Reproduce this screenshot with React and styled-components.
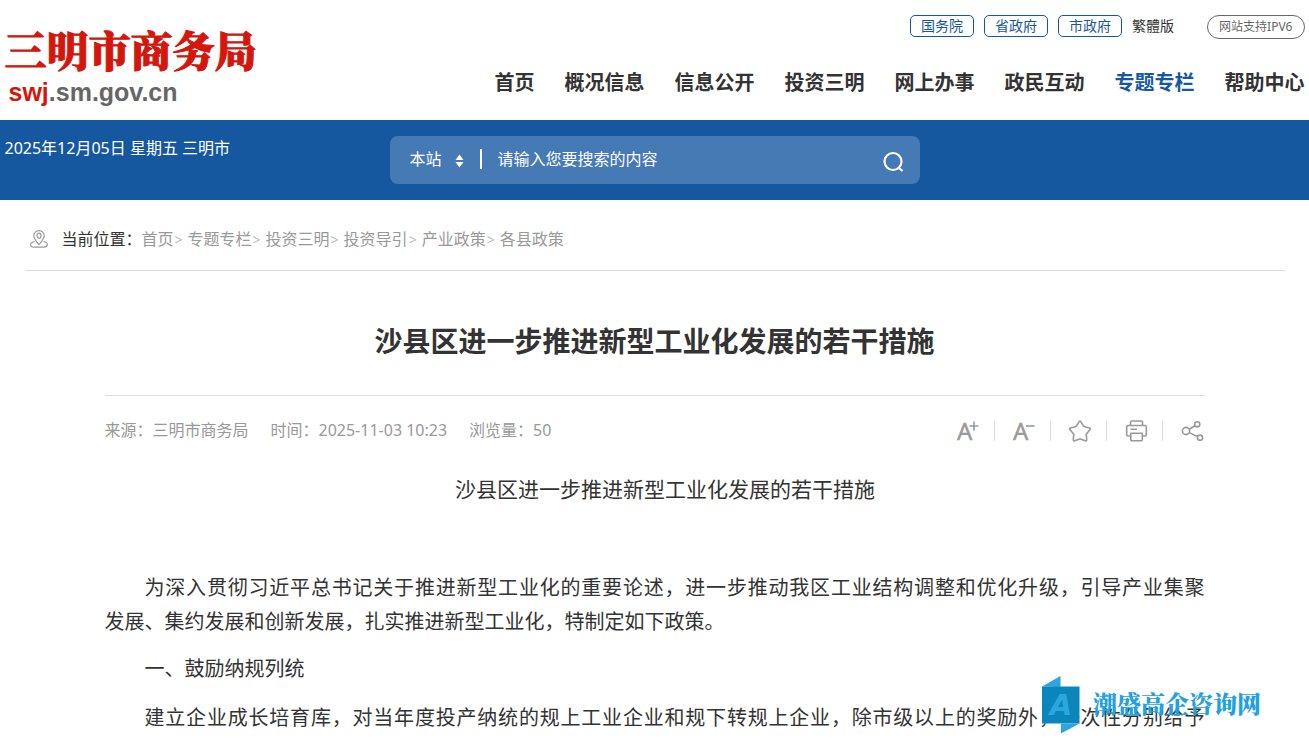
import React from "react";
import styled, { createGlobalStyle } from "styled-components";

const GlobalStyle = createGlobalStyle`
  * {
    box-sizing: border-box;
  }

  body {
    margin: 0;
    background: #fff;
    color: #333;
    font-family: "Noto Sans", "Noto Sans CJK SC", sans-serif;
    font-size: 16px;
    line-height: 24px;
  }

  a {
    color: inherit;
    text-decoration: none;
  }

  button,
  input,
  select {
    font: inherit;
    color: inherit;
    background: none;
    border: 0;
    padding: 0;
    margin: 0;
    outline: none;
  }

  button {
    cursor: pointer;
  }
`;

const Page = styled.div`
  position: relative;
`;

const Container = styled.div`
  max-width: 1300px;
  margin: 0 auto;
`;

// header
const Header = styled(Container).attrs({ as: "header" })`
  display: flex;
  justify-content: space-between;
  height: 120px;
`;

const Logo = styled.a`
  display: flex;
  flex-direction: column;
  padding-top: 24px;
  color: #d3170d;
`;

const LogoName = styled.span`
  font-family: "Noto Serif CJK SC", "Noto Sans CJK SC", serif;
  font-size: 42px;
  font-weight: 900;
  line-height: 50px;
  -webkit-text-stroke: 1px #d3170d;
`;

const LogoDomain = styled.span`
  padding: 2px 0 0 4px;
  font-family: "Liberation Sans", Arial, sans-serif;
  font-size: 25px;
  font-weight: 700;
  line-height: 32px;

  em {
    font-style: normal;
    color: #666;
  }
`;

const HeaderRight = styled.div`
  display: flex;
  flex-direction: column;
  align-items: flex-end;
  padding-top: 15px;
`;

const TopLinks = styled.div`
  display: flex;
  gap: 10px;
  height: 24px;
  font-size: 14px;
  line-height: 22px;
`;

const GovLink = styled.a`
  height: 22px;
  padding: 0 10px;
  border: 1px solid #15589f;
  border-radius: 5px;
  color: #15589f;
  line-height: 20px;
`;

const Ipv6Badge = styled.a`
  height: 24px;
  margin-left: 23px;
  padding: 0 11px;
  border: 1px solid #666;
  border-radius: 12px;
  color: #666;
  font-size: 12px;
  line-height: 22px;
`;

const Nav = styled.nav`
  display: flex;
  gap: 30px;
  padding-top: 29px;
  font-size: 20px;
  font-weight: 700;
  line-height: 30px;
  white-space: nowrap;
`;

const NavLink = styled.a`
  color: ${(props) => (props.$active ? "#15589f" : "#333")};
`;

// search band
const Band = styled.div`
  background: #15589f;
  color: #fff;
`;

const BandInner = styled(Container)`
  display: grid;
  grid-template-columns: 1fr 530px 1fr;
  height: 80px;
  padding-top: 16px;
`;

const SearchBox = styled.form`
  display: flex;
  align-items: center;
  height: 48px;
  padding: 0 16px 2px 20px;
  border-radius: 8px;
  background: #457ab4;
`;

const ScopeSelect = styled.select`
  width: 32px;
  appearance: none;
  cursor: pointer;
`;

const ScopeArrows = styled.svg`
  margin: 4px 16px 0 13px;
`;

const SearchInput = styled.input`
  flex: 1;
  height: 20px;
  padding-left: 16px;
  border-left: 2px solid #fff;
  line-height: 20px;

  &::placeholder {
    color: #fff;
    opacity: 1;
  }
`;

const SearchButton = styled.button`
  display: flex;
  padding-top: 6px;
`;

// breadcrumb
const Breadcrumb = styled.nav`
  display: flex;
  align-items: center;
  max-width: 1260px;
  height: 71px;
  margin: 0 auto;
  padding: 8px 5px 0;
  border-bottom: 1px solid #ddd;
  color: #999;
`;

const CrumbLabel = styled.span`
  padding: 0 0 0 14px;
  color: #333;
`;

const Crumb = styled.a`
  & + &::before {
    content: ">";
    padding: 0 5px 0 1px;
    color: #bbb;
    font-size: 14px;
  }
`;

// article
const Article = styled.article`
  max-width: 1100px;
  margin: 0 auto;
`;

const Title = styled.h1`
  margin: 0;
  padding: 49px 0 33px;
  border-bottom: 1px solid #ddd;
  font-size: 28px;
  line-height: 42px;
  text-align: center;
`;

const InfoBar = styled.div`
  display: flex;
  justify-content: space-between;
  align-items: center;
  height: 70px;
  color: #999;
`;

const Info = styled.div`
  display: flex;
  gap: 22px;
  padding-bottom: 2px;
`;

const Tools = styled.div`
  display: flex;
  align-items: center;
`;

const ToolButton = styled.button`
  display: flex;
  align-items: center;
  height: 20px;
  padding: 0 13px 0 18px;
  border-right: 1px solid #ddd;

  &:last-child {
    padding-right: 0;
    border-right: 0;
  }

  svg {
    overflow: visible;
  }
`;

const Subtitle = styled.h2`
  margin: 0 0 65px;
  padding-top: 6px;
  font-size: 21px;
  font-weight: 400;
  line-height: 34px;
  text-align: center;
  text-indent: 1em;
`;

const SectionTitle = styled.h3`
  margin: 13px 0 15px;
  font-size: 20px;
  font-weight: 400;
  line-height: 34px;
  text-indent: 2em;
`;

const Paragraph = styled.p`
  margin: 0;
  font-size: 20px;
  line-height: 34px;
  text-align: justify;
  text-align-last: ${(props) => (props.$full ? "justify" : "auto")};
  text-indent: 2em;
`;

const KeepTogether = styled.span`
  white-space: nowrap;
`;

// floating brand in the corner
const Watermark = styled.div`
  position: absolute;
  right: 48px;
  top: 676px;
  display: flex;
  align-items: center;
  gap: 13px;
  color: #1fa2df;
  font-family: "Noto Serif CJK SC", "Noto Sans CJK SC", serif;
  font-size: 24px;
  font-weight: 900;
  line-height: 36px;

  span {
    padding-bottom: 4px;
  }
`;

const ToolIcon = ({ children }) => (
  <svg
    width="24"
    height="24"
    viewBox="0 0 24 24"
    fill="none"
    stroke="#999"
    strokeWidth="1.6"
    strokeLinejoin="round"
  >
    {children}
  </svg>
);

const LetterA = () => (
  <text
    x="0"
    y="21"
    fill="#999"
    stroke="#999"
    strokeWidth="0.4"
    fontFamily="Noto Sans"
    fontSize="24"
  >
    A
  </text>
);

const tools = [
  {
    label: "放大字体",
    icon: (
      <>
        <LetterA />
        <path d="M12.5 7h9M17 2.5v9" />
      </>
    ),
  },
  {
    label: "缩小字体",
    icon: (
      <>
        <LetterA />
        <path d="M13 7h8.5" />
      </>
    ),
  },
  {
    label: "收藏",
    icon: (
      <path d="M10.2 2.6q.8-1.2 1.6 0l2.9 4.6q.2.4.7.5l5.2 1.3q1.4.4.5 1.5l-3.5 4.2q-.3.4-.3.9l.4 5.2q0 1.5-1.4 1l-4.8-1.9q-.5-.2-1 0l-4.8 1.9q-1.4.5-1.4-1l.4-5.2q0-.5-.3-.9L.9 10.5q-.9-1.1.5-1.5l5.2-1.3q.5-.1.7-.5z" />
    ),
  },
  {
    label: "打印",
    icon: (
      <>
        <path d="M5.5 6.5V3q0-1 1-1h10q1 0 1 1v3.5" />
        <path d="M5.5 17H3q-1.3 0-1.3-1.3V8q0-1.5 1.5-1.5h16.6q1.5 0 1.5 1.5v7.7q0 1.3-1.3 1.3h-2.5" />
        <path d="M5.8 14.2h11.5v6.6q0 1-1 1H6.8q-1 0-1-1zM5.5 10.2h6.5" />
      </>
    ),
  },
  {
    label: "分享",
    icon: (
      <>
        <circle cx="5" cy="12" r="3.6" />
        <circle cx="16.2" cy="5.3" r="2.6" />
        <circle cx="19" cy="18.7" r="2.6" />
        <path d="M8.2 10.2l5.7-3.5M8.3 13.6l8.3 4" />
      </>
    ),
  },
];

const govLinks = ["国务院", "省政府", "市政府"];

const navItems = [
  "首页",
  "概况信息",
  "信息公开",
  "投资三明",
  "网上办事",
  "政民互动",
  "专题专栏",
  "帮助中心",
];

const crumbs = [
  "首页",
  "专题专栏",
  "投资三明",
  "投资导引",
  "产业政策",
  "各县政策",
];

const App = () => {
  return (
    <Page>
      <GlobalStyle />
      <Header>
        <Logo href="#">
          <LogoName>三明市商务局</LogoName>
          <LogoDomain>
            swj<em>.sm.gov.cn</em>
          </LogoDomain>
        </Logo>
        <HeaderRight>
          <TopLinks>
            {govLinks.map((item) => (
              <GovLink href="#" key={item}>
                {item}
              </GovLink>
            ))}
            <a href="#">繁體版</a>
            <Ipv6Badge href="#">网站支持IPV6</Ipv6Badge>
          </TopLinks>
          <Nav>
            {navItems.map((item) => (
              <NavLink href="#" key={item} $active={item === "专题专栏"}>
                {item}
              </NavLink>
            ))}
          </Nav>
        </HeaderRight>
      </Header>

      <Band>
        <BandInner>
          <span>2025年12月05日 星期五 三明市</span>
          <SearchBox onSubmit={(event) => event.preventDefault()}>
            <ScopeSelect aria-label="搜索范围">
              <option>本站</option>
            </ScopeSelect>
            <ScopeArrows width="9" height="14" viewBox="0 0 9 14" fill="#fff">
              <path d="M4.5 0.5L8.5 6H.5zM4.5 13.5L.5 8h8z" />
            </ScopeArrows>
            <SearchInput
              type="text"
              aria-label="搜索内容"
              placeholder="请输入您要搜索的内容"
            />
            <SearchButton type="submit" aria-label="搜索">
              <svg
                width="22"
                height="22"
                viewBox="0 0 22 22"
                fill="none"
                stroke="#fff"
                strokeWidth="2.2"
              >
                <circle cx="11" cy="10.5" r="8.5" />
                <path d="M16.5 16.5l4 3.5" />
              </svg>
            </SearchButton>
          </SearchBox>
        </BandInner>
      </Band>

      <Breadcrumb>
        <svg
          width="18"
          height="18"
          viewBox="0 0 18 18"
          fill="none"
          stroke="#999"
          strokeWidth="1.2"
        >
          <path d="M9 14.5C6.5 11.5 3.8 8.8 3.8 5.8a5.2 5.2 0 0 1 10.4 0c0 3-2.7 5.7-5.2 8.7z" />
          <ellipse cx="9" cy="5.8" rx="2" ry="2.6" />
          <path d="M4.5 11.5C2 12 .7 13 .7 14.5c0 1.7 1.3 2.7 3.3 2.7h10c2 0 3.3-1 3.3-2.7 0-1.5-1.3-2.5-3.8-3" />
        </svg>
        <CrumbLabel>当前位置：</CrumbLabel>
        {crumbs.map((item) => (
          <Crumb href="#" key={item}>
            {item}
          </Crumb>
        ))}
      </Breadcrumb>

      <Article>
        <Title>沙县区进一步推进新型工业化发展的若干措施</Title>
        <InfoBar>
          <Info>
            <span>来源：三明市商务局</span>
            <span>时间：2025-11-03 10:23</span>
            <span>浏览量：50</span>
          </Info>
          <Tools>
            {tools.map((tool) => (
              <ToolButton type="button" key={tool.label} title={tool.label}>
                <ToolIcon>{tool.icon}</ToolIcon>
              </ToolButton>
            ))}
          </Tools>
        </InfoBar>

        <Subtitle>沙县区进一步推进新型工业化发展的若干措施</Subtitle>
        <Paragraph>
          为深入贯彻习近平总书记关于推进新型工业化的重要论述，进一步推动我区工业结构调整和优化升级，引导产业集聚
          <KeepTogether>发展、集约</KeepTogether>
          发展和创新发展，扎实推进新型工业化，特制定如下政策。
        </Paragraph>
        <SectionTitle>一、鼓励纳规列统</SectionTitle>
        <Paragraph $full>
          建立企业成长培育库，对当年度投产纳统的规上工业企业和规下转规上企业，除市级以上的奖励外，一次性分别给予
        </Paragraph>
      </Article>

      <Watermark>
        <svg width="38" height="58" viewBox="0 0 38 58">
          <path d="M0 10.5L18.5 0v11z" fill="#2ba7e0" />
          <path d="M0 10.5h37.5v37H0z" fill="#0b86bd" />
          <path d="M19 47.5h18.5L19 57.5z" fill="#2ba7e0" />
          <text
            x="19"
            y="39"
            fill="#2ba7e0"
            fontFamily="DejaVu Sans"
            fontSize="29"
            fontStyle="italic"
            fontWeight="700"
            textAnchor="middle"
          >
            A
          </text>
        </svg>
        <span>潮盛高企咨询网</span>
      </Watermark>
    </Page>
  );
};

export default App;
